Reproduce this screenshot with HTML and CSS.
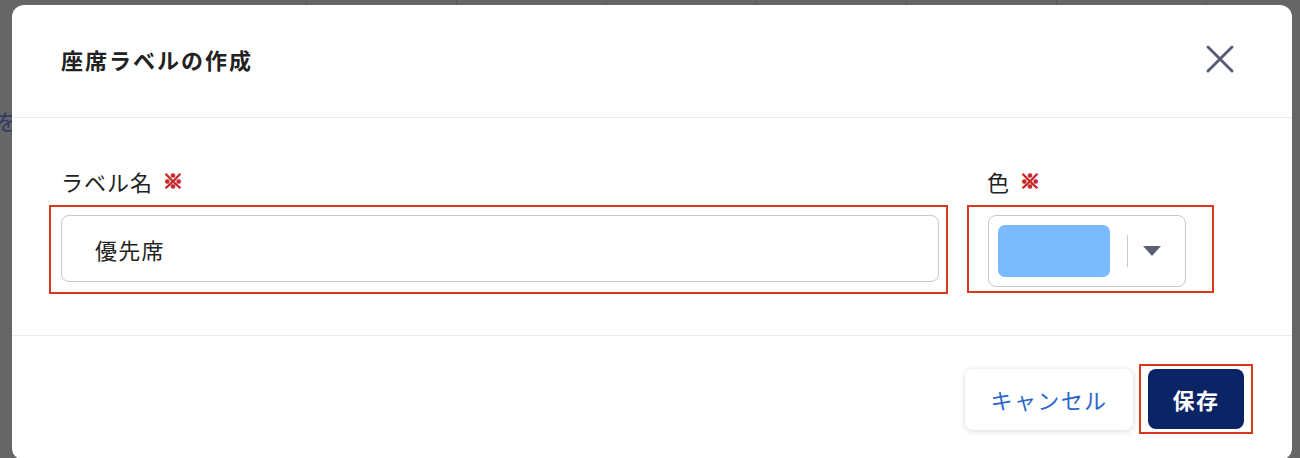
FILE: index.html
```html
<!DOCTYPE html>
<html lang="ja">
<head>
<meta charset="utf-8">
<title>座席ラベルの作成</title>
<link rel="stylesheet" href="styles.css">
</head>
<body>
<div class="page-behind" aria-hidden="true">
  <div class="grid-top">
    <span class="cell"></span><span class="cell"></span><span class="cell"></span><span class="cell"></span><span class="cell"></span><span class="cell"></span><span class="cell"></span>
  </div>
  <span class="side-text">を</span>
</div>

<div class="modal" role="dialog" aria-labelledby="dlg-title">
  <header class="modal-header">
    <h1 id="dlg-title" class="modal-title">座席ラベルの作成</h1>
    <button class="close-btn" aria-label="閉じる">
      <svg width="30" height="30" viewBox="0 0 30 30"><path d="M3 3 L27 27 M27 3 L3 27" stroke="#5b5d78" stroke-width="3" stroke-linecap="round" fill="none"/></svg>
    </button>
  </header>

  <div class="modal-body">
    <div class="field field-name">
      <label class="field-label">ラベル名<span class="req">※</span></label>
      <div class="annot annot-name">
        <div class="text-input">優先席</div>
      </div>
    </div>
    <div class="field field-color">
      <label class="field-label">色<span class="req">※</span></label>
      <div class="annot annot-color">
        <div class="color-select">
          <span class="swatch"></span>
          <span class="divider"></span>
          <svg class="caret" width="18" height="10" viewBox="0 0 18 10"><path d="M0 0 H18 L9 10 Z" fill="#5c5e76"/></svg>
        </div>
      </div>
    </div>
  </div>

  <footer class="modal-footer">
    <button class="btn btn-cancel">キャンセル</button>
    <div class="annot annot-save">
      <button class="btn btn-save">保存</button>
    </div>
  </footer>
</div>
</body>
</html>
```

FILE: styles.css
```css
* { box-sizing: border-box; }

html, body {
  margin: 0;
  padding: 0;
  width: 1300px;
  height: 458px;
  overflow: hidden;
}

body {
  background: #666666;
  font-family: "Noto Sans CJK JP", "Noto Sans", sans-serif;
  color: #222;
  position: relative;
}

/* page behind the overlay */
.page-behind {
  position: absolute;
  inset: 0;
  z-index: 0;
}
.grid-top {
  position: absolute;
  top: -30px;
  left: 157px;
  display: flex;
  height: 35px;
}
.grid-top .cell {
  width: 150px;
  border-right: 1px solid #5a5a5a;
}
.side-text {
  position: absolute;
  left: -4px;
  top: 104px;
  font-size: 22px;
  color: #2d3a66;
}

/* modal */
.modal {
  position: relative;
  z-index: 1;
  margin: 5px 0 0 12px;
  width: 1280px;
  height: 455px;
  background: #fff;
  border-radius: 12px;
  display: flex;
  flex-direction: column;
}

.modal-header {
  height: 113px;
  flex: none;
  display: flex;
  align-items: center;
  justify-content: space-between;
  padding: 0 57px 4px 49px;
  border-bottom: 1px solid #ececee;
}
.modal-title {
  margin: 0;
  font-size: 22px;
  font-weight: 700;
  letter-spacing: 2px;
  color: #222;
}
.close-btn {
  border: 0;
  background: none;
  padding: 0;
  width: 30px;
  height: 30px;
  display: flex;
  cursor: pointer;
}

.modal-body {
  height: 218px;
  flex: none;
  display: flex;
  gap: 19px;
  padding: 48px 0 0 37px;
  border-bottom: 1px solid #ececee;
}
.field {
  display: flex;
  flex-direction: column;
  gap: 9px;
}
.field-label {
  height: 30px;
  line-height: 30px;
  font-size: 22px;
  letter-spacing: 1px;
  color: #222;
  display: flex;
  align-items: center;
}
.field-name .field-label { margin-left: 12px; }
.field-color .field-label { margin-left: 20px; }
.req {
  color: #c8262a;
  font-size: 20px;
  font-weight: 900;
  -webkit-text-stroke: 1.4px #c8262a;
  margin-left: 10px;
  letter-spacing: 0;
}

.annot {
  border: 2px solid #d9381e;
}
.annot-name {
  width: 899px;
  height: 89px;
  padding: 8px 7px 10px 10px;
}
.text-input {
  height: 67px;
  border: 1.5px solid #c8c8cc;
  border-radius: 8px;
  padding-left: 33px;
  display: flex;
  align-items: center;
  font-size: 22px;
  letter-spacing: 1.2px;
  color: #222;
}

.annot-color {
  width: 247px;
  height: 88px;
  padding: 8px 26px 4px 19px;
}
.color-select {
  width: 198px;
  height: 72px;
  border: 1.5px solid #c8c8cc;
  border-radius: 8px;
  display: flex;
  align-items: center;
  padding-left: 8.5px;
}
.swatch {
  width: 112px;
  height: 52px;
  background: #7bbafc;
  border-radius: 7px;
  flex: none;
}
.divider {
  width: 1.5px;
  height: 32px;
  background: #c8c8cc;
  margin-left: 17px;
  flex: none;
}
.caret {
  margin-left: 15px;
  flex: none;
}

.modal-footer {
  flex: 1;
  display: flex;
  justify-content: flex-end;
  align-items: center;
  gap: 6px;
  padding: 2px 39px 0 0;
}
.btn {
  font-family: "Noto Sans CJK JP", "Noto Sans", sans-serif;
  font-size: 22px;
  letter-spacing: 1.4px;
  border: 0;
  border-radius: 8px;
  cursor: pointer;
  display: flex;
  align-items: center;
  justify-content: center;
}
.btn-cancel {
  width: 168px;
  height: 61px;
  background: #fff;
  color: #2a66cc;
  box-shadow: 0 1px 6px rgba(0, 0, 0, 0.16);
}
.annot-save {
  padding: 3px 7px;
}
.btn-save {
  width: 96px;
  height: 60px;
  background: #0b2466;
  color: #fff;
  font-weight: 700;
}
```
